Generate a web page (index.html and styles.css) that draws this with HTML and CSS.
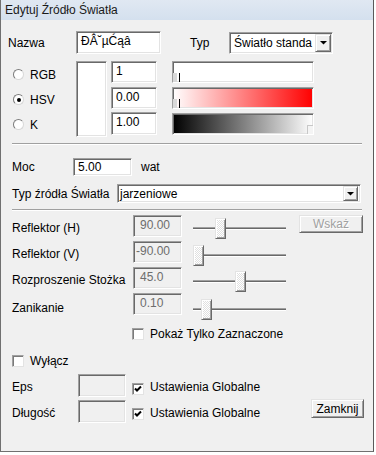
FILE: index.html
```html
<!DOCTYPE html>
<html lang="pl">
<head>
<meta charset="utf-8">
<title>Edytuj Źródło Światła</title>
<link rel="stylesheet" href="styles.css">
</head>
<body>
<div class="window">
  <div class="titlebar">Edytuj Źródło Światła</div>
  <div class="content">

    <div class="row r-name">
      <span class="lbl w-nazwa">Nazwa</span>
      <div class="field sunken f-name">ĐÂ˘µĆąâ</div>
      <span class="lbl w-typ">Typ</span>
      <div class="combo sunken c-typ">
        <span class="combo-text">Światło standa</span>
        <span class="dd"><svg width="7" height="4" viewBox="0 0 7 4"><polygon points="0,0 7,0 3.5,3.5" fill="#000"/></svg></span>
      </div>
    </div>

    <div class="color">
      <div class="radios">
        <div class="radio"><span class="rb"></span><span>RGB</span></div>
        <div class="radio"><span class="rb on"></span><span>HSV</span></div>
        <div class="radio"><span class="rb"></span><span>K</span></div>
      </div>
      <div class="preview sunken"></div>
      <div class="stack vals">
        <div class="field sunken f-val">1</div>
        <div class="field sunken f-val">0.00</div>
        <div class="field sunken f-val">1.00</div>
      </div>
      <div class="stack bars">
        <div class="bar sunken b-white"><span class="mk"></span></div>
        <div class="bar sunken b-red"><span class="mk"></span></div>
        <div class="bar sunken b-gray"><span class="mk-end"></span></div>
      </div>
    </div>

    <div class="sep s1"></div>

    <div class="row r-moc">
      <span class="lbl w-moc">Moc</span>
      <div class="field sunken f-moc">5.00</div>
      <span class="lbl w-wat">wat</span>
    </div>

    <div class="row r-src">
      <span class="lbl w-src">Typ źródła Światła</span>
      <div class="combo sunken c-src">
        <span class="combo-text">jarzeniowe</span>
        <span class="dd"><svg width="7" height="4" viewBox="0 0 7 4"><polygon points="0,0 7,0 3.5,3.5" fill="#000"/></svg></span>
      </div>
    </div>

    <div class="sep s2"></div>

    <div class="refl">
      <div class="rrow">
        <span class="lbl w-refl">Reflektor (H)</span>
        <div class="field sunken f-dis">90.00</div>
        <div class="slider sl-1"><span class="track"></span><span class="thumb" style="left:22px"></span></div>
        <div class="btn btn-dis">Wskaż</div>
      </div>
      <div class="rrow">
        <span class="lbl w-refl">Reflektor (V)</span>
        <div class="field sunken f-dis f-neg">-90.00</div>
        <div class="slider sl-2"><span class="track"></span><span class="thumb" style="left:0px"></span></div>
      </div>
      <div class="rrow">
        <span class="lbl w-refl">Rozproszenie Stożka</span>
        <div class="field sunken f-dis">45.0</div>
        <div class="slider sl-3"><span class="track"></span><span class="thumb" style="left:42px"></span></div>
      </div>
      <div class="rrow">
        <span class="lbl w-refl w-low">Zanikanie</span>
        <div class="field sunken f-dis">0.10</div>
        <div class="slider sl-4"><span class="track"></span><span class="thumb" style="left:8px"></span></div>
      </div>
    </div>

    <div class="crow c-pokaz">
      <span class="cb"></span><span class="cb-text">Pokaż Tylko Zaznaczone</span>
    </div>

    <div class="crow c-wylacz">
      <span class="cb"></span><span class="cb-text">Wyłącz</span>
    </div>

    <div class="grow g-eps">
      <span class="lbl w-g">Eps</span>
      <div class="field sunken f-g"></div>
      <span class="cb cb-g checked"><svg width="8" height="8" viewBox="0 0 8 8"><polyline points="1,3.5 3,5.5 7,1.5" fill="none" stroke="#000" stroke-width="2"/></svg></span>
      <span class="cb-text t-g">Ustawienia Globalne</span>
    </div>

    <div class="grow g-dl">
      <span class="lbl w-g">Długość</span>
      <div class="field sunken f-g"></div>
      <span class="cb cb-g cb-g2 checked"><svg width="8" height="8" viewBox="0 0 8 8"><polyline points="1,3.5 3,5.5 7,1.5" fill="none" stroke="#000" stroke-width="2"/></svg></span>
      <span class="cb-text t-g">Ustawienia Globalne</span>
      <div class="btn btn-close">Zamknij</div>
    </div>

  </div>
</div>
</body>
</html>
```

FILE: styles.css
```css
* { box-sizing: border-box; }
html, body { margin: 0; padding: 0; background: #ffffff; }
body {
  font-family: "Liberation Sans", Arial, sans-serif;
  font-size: 12px;
  line-height: 14px;
  color: #000;
}

.window {
  width: 374px;
  height: 452px;
  background: #f0f0f0;
  border-left: 1px solid #707070;
  border-right: 1px solid #5a5a5a;
  border-bottom: 1px solid #707070;
  display: flex;
  flex-direction: column;
}

.titlebar {
  height: 20px;
  line-height: 21px;
  padding-left: 4px;
  background: linear-gradient(#e0e8f2, #d4e0ee);
  color: #1a1a1a;
  white-space: nowrap;
}

.content {
  flex: 1;
  padding: 11px 9px 0 11px;
  display: flex;
  flex-direction: column;
}

/* generic 3D sunken edge */
.sunken {
  border: 1px solid;
  border-color: #a0a0a0 #ffffff #ffffff #a0a0a0;
  box-shadow: inset 1px 1px 0 #696969, inset -1px -1px 0 #e3e3e3;
}

.field {
  background: #fff;
  padding: 2px 4px 0 4px;
  white-space: nowrap;
  overflow: hidden;
}

.lbl { white-space: nowrap; }

.row { display: flex; align-items: center; }

/* name row */
.r-name { height: 23px; }
.w-nazwa { margin-left: -4px; width: 68px; }
.f-name { width: 85px; height: 23px; }
.w-typ { margin-left: 29px; width: 39px; }

.combo {
  display: flex;
  align-items: stretch;
  background: #fff;
  padding: 1px;
}
.combo-text {
  flex: 1;
  white-space: nowrap;
  display: flex;
  align-items: center;
}
.dd {
  flex: none;
  display: flex;
  align-items: center;
  justify-content: center;
  background: #f0f0f0;
  border: 1px solid;
  border-color: #e3e3e3 #696969 #696969 #e3e3e3;
  box-shadow: inset 1px 1px 0 #fff, inset -1px -1px 0 #a0a0a0;
}
.c-typ { width: 104px; height: 22px; }
.c-typ .combo-text { padding-left: 3px; }
.c-typ .dd { width: 16px; }

/* color section */
.color {
  display: flex;
  margin-top: 7px;
  height: 76px;
}
.radios {
  width: 64px;
  padding-top: 1px;
  display: flex;
  flex-direction: column;
}
.radio {
  height: 25px;
  display: flex;
  align-items: center;
}
.rb {
  width: 11px;
  height: 11px;
  margin-left: 1px;
  margin-right: 6px;
  border-radius: 50%;
  background: #fff;
  border: 1px solid;
  border-color: #7c7c7c #d8d8d8 #d8d8d8 #7c7c7c;
  display: flex;
  align-items: center;
  justify-content: center;
}
.rb.on::after {
  content: "";
  width: 4px;
  height: 4px;
  border-radius: 50%;
  background: #000;
}
.preview {
  width: 31px;
  height: 76px;
  background: #fff;
}
.stack {
  display: flex;
  flex-direction: column;
}
.vals { margin-left: 4px; width: 46px; }
.f-val { height: 22px; }
.f-val + .f-val { margin-top: 4px; }
.f-val:last-child { margin-top: 3px; height: 23px; }

.bars { margin-left: 15px; width: 142px; }
.bar { position: relative; height: 22px; }
.bar + .bar { margin-top: 4px; }
.b-white { background: #fff; }
.b-red { background: linear-gradient(to right, #ffffff, #ff0000); }
.b-gray { background: linear-gradient(to right, #000000, #ffffff); }
.mk {
  position: absolute;
  left: 0;
  bottom: 0;
  width: 4px;
  height: 9px;
  background: #d8d8d8;
}
.mk::after {
  content: "";
  position: absolute;
  left: 6px;
  top: 0;
  width: 1px;
  height: 9px;
  background: #000;
}
.mk-end {
  position: absolute;
  right: 0;
  bottom: 0;
  width: 6px;
  height: 9px;
  background: #f4f4f4;
  border-left: 1px solid #c8c8c8;
  border-top: 1px solid #c8c8c8;
}

/* separators */
.sep {
  height: 2px;
  border-top: 1px solid #a0a0a0;
  border-bottom: 1px solid #ffffff;
  margin-right: 2px;
}
.s1 { margin-top: 6px; }
.s2 { margin-top: 6px; }

/* moc row */
.r-moc { margin-top: 13px; height: 18px; }
.w-moc { width: 61px; }
.f-moc { width: 59px; height: 18px; padding-top: 1px; }
.w-wat { margin-left: 9px; }

/* source type row */
.r-src { margin-top: 8px; height: 19px; }
.w-src { width: 105px; }
.c-src { width: 244px; height: 19px; }
.c-src .combo-text { padding-left: 1px; }
.c-src .dd { width: 15px; margin-right: 1px; }

/* reflector rows */
.refl {
  margin-top: 4px;
  display: flex;
  flex-direction: column;
  gap: 4px;
}
.rrow {
  display: flex;
  align-items: flex-start;
  height: 22px;
}
.w-refl { width: 121px; margin-top: 6px; }
.w-low { margin-top: 8px; }
.f-dis {
  width: 49px;
  height: 22px;
  background: #f0f0f0;
  color: #6d6d6d;
  padding-left: 6px;
}
.f-neg { padding-left: 2px; }

.slider {
  position: relative;
  margin-left: 11px;
  width: 93px;
  height: 21px;
  display: flex;
  align-items: center;
}
.sl-1 { margin-top: 3px; }
.sl-2 { margin-top: 4px; }
.sl-3 { margin-top: 4px; }
.sl-4 { margin-top: 6px; }
.track {
  width: 100%;
  height: 3px;
  border-top: 1px solid #a0a0a0;
  border-bottom: 1px solid #ffffff;
  background: #696969;
}
.thumb {
  position: absolute;
  top: 0;
  width: 11px;
  height: 21px;
  border: 1px solid;
  border-color: #e3e3e3 #696969 #696969 #e3e3e3;
  box-shadow: inset 1px 1px 0 #fff, inset -1px -1px 0 #a0a0a0;
  background: repeating-conic-gradient(#ffffff 0 25%, #e0e0e0 0 50%) 0 0 / 2px 2px;
}

.btn {
  display: flex;
  align-items: center;
  justify-content: center;
  background: #f0f0f0;
  border: 1px solid;
  border-color: #e3e3e3 #696969 #696969 #e3e3e3;
  box-shadow: inset 1px 1px 0 #fff, inset -1px -1px 0 #a0a0a0;
  white-space: nowrap;
}
.btn-dis {
  margin-left: 13px;
  width: 64px;
  height: 18px;
  color: #a0a0a0;
  text-shadow: 1px 1px 0 #fff;
}
.btn-close {
  margin-left: auto;
  margin-top: -1px;
  width: 53px;
  height: 19px;
}

/* check rows */
.cb {
  flex: none;
  width: 12px;
  height: 12px;
  background: #fff;
  border: 1px solid;
  border-color: #a0a0a0 #e3e3e3 #e3e3e3 #a0a0a0;
  box-shadow: inset 1px 1px 0 #7a7a7a;
  display: flex;
  align-items: center;
  justify-content: center;
}
.cb-text { margin-left: 6px; white-space: nowrap; }
.crow {
  display: flex;
  align-items: center;
  height: 14px;
}
.c-pokaz { margin-top: 12px; padding-left: 120px; }
.c-wylacz { margin-top: 13px; }

.grow {
  display: flex;
  align-items: flex-start;
  height: 23px;
}
.g-eps { margin-top: 6px; }
.g-dl { margin-top: 3px; }
.w-g { width: 66px; margin-top: 6px; }
.f-g { width: 48px; height: 23px; background: #f0f0f0; }
.cb-g { margin-left: 6px; margin-top: 9px; }
.cb-g2 { margin-top: 8px; }
.t-g { margin-top: 6px; }
```
